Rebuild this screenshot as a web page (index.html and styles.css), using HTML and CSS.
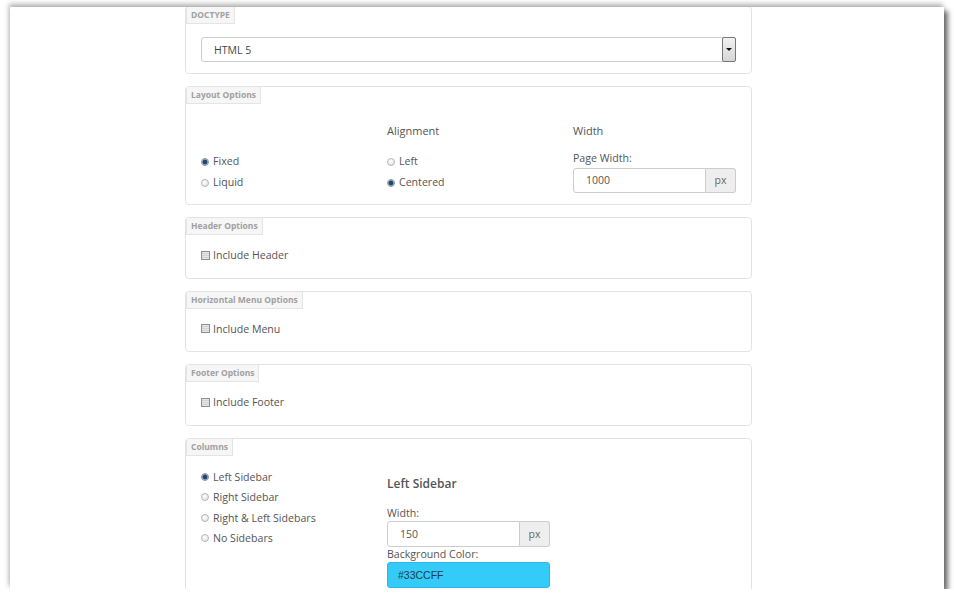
FILE: index.html
```html
<!doctype html>
<html lang="en">
<head>
    <meta charset="utf-8" />
    <title>Layout Generator</title>
    <link rel="stylesheet" href="styles.css">
</head>
<body>
    <div class="window">
        <form class="page">
            <div class="box box-doctype">
                <div class="legend">DOCTYPE</div>
                <div class="select">
                    <span class="select-value">HTML 5</span>
                    <span class="select-btn"><span class="caret"></span></span>
                </div>
            </div>

            <div class="box box-layout">
                <div class="legend">Layout Options</div>
                <div class="cols">
                    <div class="col">
                        <div class="col-title">&nbsp;</div>
                        <label class="opt"><span class="radio checked"></span>Fixed</label>
                        <label class="opt"><span class="radio"></span>Liquid</label>
                    </div>
                    <div class="col">
                        <div class="col-title">Alignment</div>
                        <label class="opt"><span class="radio"></span>Left</label>
                        <label class="opt"><span class="radio checked"></span>Centered</label>
                    </div>
                    <div class="col">
                        <div class="col-title">Width</div>
                        <div class="field-label">Page Width:</div>
                        <div class="input-group">
                            <span class="input">1000</span>
                            <span class="addon">px</span>
                        </div>
                    </div>
                </div>
            </div>

            <div class="box box-check">
                <div class="legend">Header Options</div>
                <label class="opt check"><span class="checkbox"></span>Include Header</label>
            </div>

            <div class="box box-check">
                <div class="legend">Horizontal Menu Options</div>
                <label class="opt check"><span class="checkbox"></span>Include Menu</label>
            </div>

            <div class="box box-check">
                <div class="legend">Footer Options</div>
                <label class="opt check"><span class="checkbox"></span>Include Footer</label>
            </div>

            <div class="box box-columns">
                <div class="legend">Columns</div>
                <div class="cols">
                    <div class="col radios">
                        <label class="opt"><span class="radio checked"></span>Left Sidebar</label>
                        <label class="opt"><span class="radio"></span>Right Sidebar</label>
                        <label class="opt"><span class="radio"></span>Right &amp; Left Sidebars</label>
                        <label class="opt"><span class="radio"></span>No Sidebars</label>
                    </div>
                    <div class="col">
                        <div class="side-title">Left Sidebar</div>
                        <div class="field-label">Width:</div>
                        <div class="input-group tall">
                            <span class="input">150</span>
                            <span class="addon">px</span>
                        </div>
                        <div class="field-label">Background Color:</div>
                        <div class="color-input">#33CCFF</div>
                    </div>
                    <div class="col"></div>
                </div>
            </div>
        </form>
    </div>
</body>
</html>
```

FILE: styles.css
```css
body { margin:0; background:#fff; font-family:"Open Sans", "Liberation Sans", sans-serif; color:#555; }
.window {
    margin:7px 0 0 10px; width:934px; height:582px; background:#fff; overflow:hidden;
    box-shadow: 4px 4px 5px rgba(0,0,0,.55), -1px -3px 5px rgba(0,0,0,.3);
}
.page { margin:-1px 0 0 175px; width:567px; }

.box { border:1px solid #e3e3e3; border-radius:4px; margin-bottom:12px; padding:0 15px 11px; }
.legend {
    display:block; width:max-content; margin-left:-15px; font-size:8.5px; font-weight:700; line-height:12px;
    color:#a0a0a0; background:#f6f6f6; border:1px solid #e4e4e4; border-top:0; padding:2px 4px;
}

.select {
    display:flex; margin-top:13px; height:25px; border:1px solid #ccc; border-radius:3px;
    box-sizing:border-box; align-items:center;
}
.select-value { flex:1; padding-left:12px; font-size:10.5px; color:#444; }
.select-btn {
    width:12px; height:23px; margin-right:-1px; border:1px solid #777; border-radius:2px;
    background:linear-gradient(#f2f2f2, #d6d6d6); display:flex; align-items:center; justify-content:center;
}
.caret { width:0; height:0; border-left:3px solid transparent; border-right:3px solid transparent; border-top:3px solid #111; }

.cols { display:grid; grid-template-columns:repeat(3, 1fr); column-gap:23px; }
.col-title { font-size:11px; line-height:17px; margin:18px 0 12px; }
.opt { display:flex; align-items:center; font-size:10.6px; line-height:21px; color:#555; }
.radio {
    width:6px; height:6px; border:1px solid #b5b5b5; border-radius:50%; margin-right:4px;
    background:radial-gradient(circle at 40% 35%, #fff, #ddd);
}
.radio.checked { border-color:#8494a6; background:radial-gradient(circle, #23466e 0 2px, #c8d2dc 3px); }
.checkbox {
    width:7px; height:7px; border:1px solid #8e8e8e; margin-right:3px;
    background:repeating-linear-gradient(#e6e6e6 0 1px, #d2d2d2 1px 2px);
}
.box-check { padding-bottom:12.5px; }
.box-check .opt { margin-top:10px; line-height:20px; }

.field-label { font-size:10.6px; line-height:15px; }
.box-layout .field-label { margin-bottom:2px; }
.input-group { display:flex; height:25px; }
.input {
    flex:1; border:1px solid #ccc; border-radius:3px 0 0 3px; padding-left:12px;
    font-size:10.5px; line-height:23px; color:#555;
}
.addon {
    width:29px; border:1px solid #ccc; border-left:0; border-radius:0 3px 3px 0; background:#eee;
    text-align:center; font-size:10.5px; line-height:23px; color:#666;
}
.input-group.tall { height:26px; }
.input-group.tall .input, .input-group.tall .addon { line-height:24px; }

.box-columns .radios { margin-top:11px; }
.box-columns .opt { line-height:20.5px; }
.side-title { font-size:12px; font-weight:600; line-height:20px; margin:18px 0 12px; color:#555; }
.color-input {
    height:26px; box-sizing:border-box; border:1px solid #2bb8e6; border-radius:3px; background:#35cbf9;
    padding-left:10px; font:10.5px/24px "Liberation Sans", Arial, sans-serif; color:#1d3d4a;
}
```
